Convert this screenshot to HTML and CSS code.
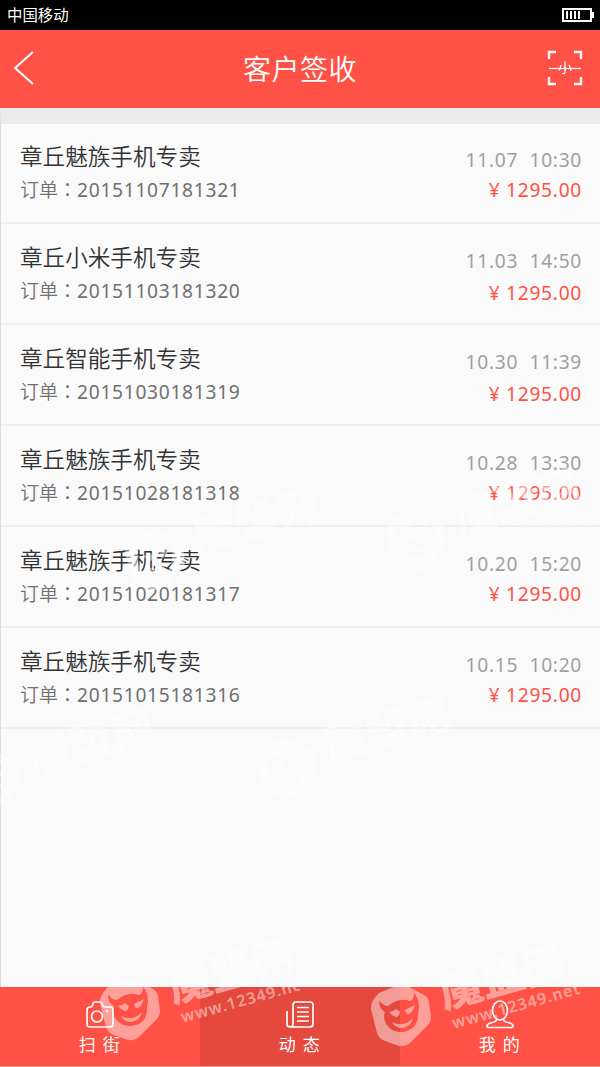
FILE: index.html
```html
<!DOCTYPE html>
<html lang="zh-CN">
<head>
  <meta charset="UTF-8">
  <meta name="viewport" content="width=device-width, initial-scale=1.0">
  <title>客户签收</title>
  <link rel="stylesheet" href="styles.css">
</head>
<body>
  <div class="phone">
    <div class="status-bar">
      <span>中国移动</span>
      <svg class="battery" width="32" height="14" viewBox="0 0 32 14">
        <rect x="1" y="1" width="28" height="12" fill="none" stroke="#fff" stroke-width="2"/>
        <rect x="30" y="4" width="2" height="6" fill="#fff"/>
        <path d="M5 3v8M9 3v8M13 3v8M17 3v8" stroke="#fff" stroke-width="2"/>
      </svg>
    </div>

    <header class="header">
      <svg class="back" width="36" height="36" viewBox="0 0 36 36">
        <path d="M20 2L2 18L20 34" fill="none" stroke="#fff" stroke-width="2"/>
      </svg>
      <h1>客户签收</h1>
      <svg class="scan" width="36" height="36" viewBox="0 0 36 36">
        <path d="M2 9V2H9M27 2H34V9M34 27V34H27M9 34H2V27" fill="none" stroke="#fff" stroke-width="2.4"/>
        <path d="M2 18.500H34" stroke="#fff" stroke-width="1.2"/>
        <path d="M18 11.500V22.500Q18 24 15 23.500M14 15Q13.500 18 12 20.500M22 15Q23.500 18 24 20.500" fill="none" stroke="#fff" stroke-width="1.4"/>
      </svg>
    </header>

    <ul class="list">
      <li class="item">
        <div class="shop"><h2>章丘魅族手机专卖</h2><p>订单<i class="colon" lang="zh-TW">：</i><span class="num">20151107181321</span></p></div>
        <div class="info"><span class="time">11.07&nbsp; 10:30</span><span class="price">¥ 1295.00</span></div>
      </li>
      <li class="item low">
        <div class="shop"><h2>章丘小米手机专卖</h2><p>订单<i class="colon" lang="zh-TW">：</i><span class="num">20151103181320</span></p></div>
        <div class="info"><span class="time">11.03&nbsp; 14:50</span><span class="price">¥ 1295.00</span></div>
      </li>
      <li class="item low">
        <div class="shop"><h2>章丘智能手机专卖</h2><p>订单<i class="colon" lang="zh-TW">：</i><span class="num">20151030181319</span></p></div>
        <div class="info"><span class="time">10.30&nbsp; 11:39</span><span class="price">¥ 1295.00</span></div>
      </li>
      <li class="item">
        <div class="shop"><h2>章丘魅族手机专卖</h2><p>订单<i class="colon" lang="zh-TW">：</i><span class="num">20151028181318</span></p></div>
        <div class="info"><span class="time">10.28&nbsp; 13:30</span><span class="price">¥ 1295.00</span></div>
      </li>
      <li class="item">
        <div class="shop"><h2>章丘魅族手机专卖</h2><p>订单<i class="colon" lang="zh-TW">：</i><span class="num">20151020181317</span></p></div>
        <div class="info"><span class="time">10.20&nbsp; 15:20</span><span class="price">¥ 1295.00</span></div>
      </li>
      <li class="item">
        <div class="shop"><h2>章丘魅族手机专卖</h2><p>订单<i class="colon" lang="zh-TW">：</i><span class="num">20151015181316</span></p></div>
        <div class="info"><span class="time">10.15&nbsp; 10:20</span><span class="price">¥ 1295.00</span></div>
      </li>
    </ul>

    <nav class="tabs">
      <div class="tab">
        <svg width="28" height="28" viewBox="0 0 28 28" fill="none" stroke="#fff" stroke-width="1.7">
          <path d="M4 6H5Q6 6 6.500 4L7 2.500Q7.500 1 9 1H14Q15.500 1 16 2.500L16.500 4Q17 6 18.500 6H24Q27 6 27 9V23Q27 26 24 26H4Q1 26 1 23V9Q1 6 4 6Z"/>
          <circle cx="11" cy="15.500" r="5.500"/>
          <circle cx="21" cy="10" r="1.3" fill="#fff" stroke="none"/>
        </svg>
        <span>扫 街</span>
      </div>
      <div class="tab active">
        <svg width="28" height="28" viewBox="0 0 28 28" fill="none" stroke="#fff" stroke-width="1.7">
          <path d="M1 10V23Q1 26 4 26H24Q27 26 27 23V4Q27 1 24 1H10Q7 1 7 4V23Q7 26 4 26M11 6.500H23M11 11H23M11 15.500H23M11 20H23"/>
        </svg>
        <span>动 态</span>
      </div>
      <div class="tab">
        <svg width="28" height="28" viewBox="0 0 28 28" fill="none" stroke="#fff" stroke-width="1.7">
          <ellipse cx="14" cy="9.500" rx="7.500" ry="9.500"/>
          <path d="M10.500 18Q11 20 8 21Q1 22.500 1 25Q1 26.500 3 26.500H25Q27 26.500 27 25Q27 22.500 20 21Q17 20 17.500 18"/>
        </svg>
        <span>我 的</span>
      </div>
    </nav>

    <svg class="watermark" width="600" height="1067" viewBox="0 0 600 1067">
      <defs>
        <clipPath id="tile"><rect x="0" y="900" width="300" height="167"/></clipPath>
        <g id="mark">
          <path fill-rule="evenodd" d="M-22-22L-5-29Q1-31 8-28L23-20Q27-18 28-13L30 2Q30 7 26 11L10 27Q5 32-2 31L-16 26Q-22 24-24 18L-30-6Q-31-13-22-22ZM-22-15Q-18-9-13-9Q-2-18 9-14Q13-15 13-22Q20-14 17-2C18 10 10 17 0 17C-9 17-16 11-17 2Q-17-1-16-3Q-22-6-22-15Z"/>
          <path d="M-12-3L-8-4L-5-6L-1-3Q-2 2-5 2Q-9 1-12-3ZM14-10L4-5Q5 0 8-1Q12-3 14-10ZM-9 7Q3 13 12 3Q10 12 1 13Q-6 13-9 7Z"/>
          <g transform="translate(46 -3) rotate(-15.500)">
            <text class="mark-name" x="-2" y="-4">魔盟网</text>
            <text class="mark-url" x="2" y="18">www.12349.net</text>
          </g>
        </g>
      </defs>
      <g clip-path="url(#tile)"><use href="#mark" x="130" y="1009"/></g>
      <use href="#mark" x="401" y="1015"/>
      <use href="#mark" x="286" y="768"/>
      <use href="#mark" x="-10" y="780"/>
      <use href="#mark" x="416" y="540"/>
      <use href="#mark" x="155" y="559"/>
    </svg>
  </div>
</body>
</html>
```
FILE: styles.css
```css
* {
  box-sizing: border-box;
  margin: 0;
  padding: 0;
}

body {
  font-family: "Noto Sans CJK SC", sans-serif;
  background: #fafafa;
}

.phone {
  position: relative;
  display: flex;
  flex-direction: column;
  height: 1067px;
  width: 600px;
  overflow: hidden;
}

.status-bar {
  display: flex;
  justify-content: space-between;
  align-items: center;
  height: 30px;
  padding: 0 6px 0 7px;
  background: #000;
  color: #fff;
  font-size: 15.4px;
}

.status-bar span {
  padding-bottom: 2px;
}

.header {
  display: flex;
  justify-content: space-between;
  align-items: center;
  height: 78px;
  padding: 0 17px 2px 13px;
  background: #ff5145;
  color: #fff;
}

.header h1 {
  font-size: 28px;
  font-weight: 350;
  letter-spacing: 0.5px;
  padding-left: 4px;
}

.list {
  flex: 1;
  list-style: none;
  background: #fafafa;
  border-top: 16px solid #ebebeb;
  border-left: 1px solid #dcdcdc;
}

.item {
  display: flex;
  justify-content: space-between;
  height: 101px;
  padding: 16px 18px 0 19px;
  border-bottom: 2px solid #efefef;
}

.item:first-child {
  height: 100px;
  padding-top: 15px;
}

.shop h2 {
  font-size: 22.6px;
  font-weight: 350;
  line-height: 33px;
  color: #333;
}

.shop p {
  font-size: 19px;
  font-weight: 350;
  line-height: 34px;
  color: #707070;
}

.colon {
  font-family: "Noto Sans CJK TC", sans-serif;
  font-style: normal;
}

.num,
.info {
  font-family: "Noto Sans", sans-serif;
  font-size: 19.2px;
  font-weight: 400;
  letter-spacing: 0.7px;
}

.info {
  display: flex;
  flex-direction: column;
  align-items: flex-end;
  padding-top: 6px;
  line-height: 30px;
}

.time {
  color: #a0a0a0;
}

.price {
  color: #ff5145;
}

.low .price {
  padding-top: 2px;
}

.tabs {
  display: flex;
  height: 80px;
  border-bottom: 1px solid #ff9c95;
}

.tab {
  flex: 1;
  display: flex;
  flex-direction: column;
  align-items: center;
  padding-top: 14px;
  background: #ff5145;
  color: #fff;
  font-size: 17px;
  line-height: 26px;
  letter-spacing: 1.6px;
}

.tab.active {
  background: #e5493e;
}

.tab svg {
  overflow: visible;
  margin-bottom: 2px;
}

/* site mark laid over the whole screen */
.watermark {
  position: absolute;
  left: 0;
  top: 0;
  fill: #fff;
  opacity: 0.45;
  pointer-events: none;
}

.mark-name {
  font-size: 43px;
  font-weight: 900;
}

.mark-url {
  font-family: "Noto Sans", sans-serif;
  font-size: 16px;
  font-weight: 600;
  letter-spacing: 1px;
}
```
